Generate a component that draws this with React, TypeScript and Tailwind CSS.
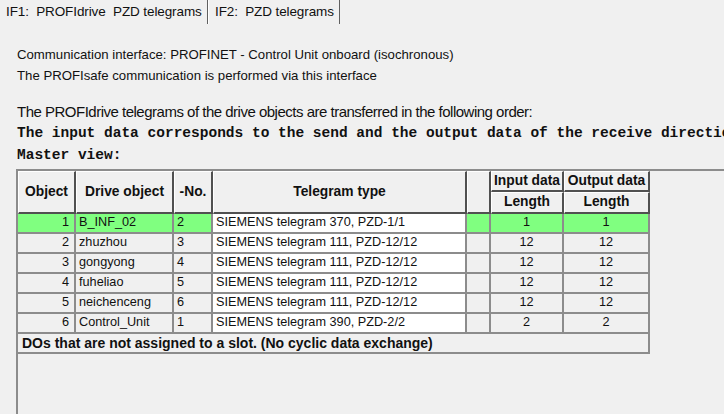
import React from "react";

const rows = [
  { n: "1", name: "B_INF_02", no: "2", tel: "SIEMENS telegram 370, PZD-1/1", i: "1", o: "1", green: true },
  { n: "2", name: "zhuzhou", no: "3", tel: "SIEMENS telegram 111, PZD-12/12", i: "12", o: "12" },
  { n: "3", name: "gongyong", no: "4", tel: "SIEMENS telegram 111, PZD-12/12", i: "12", o: "12" },
  { n: "4", name: "fuheliao", no: "5", tel: "SIEMENS telegram 111, PZD-12/12", i: "12", o: "12" },
  { n: "5", name: "neichenceng", no: "6", tel: "SIEMENS telegram 111, PZD-12/12", i: "12", o: "12" },
  { n: "6", name: "Control_Unit", no: "1", tel: "SIEMENS telegram 390, PZD-2/2", i: "2", o: "2" },
];

const hdr =
  "bg-[#f0f0f0] border-t border-l border-t-white border-l-white border-r-2 border-b-2 border-r-[#505050] border-b-[#505050] flex items-center justify-center font-bold text-[13.8px] text-[#111] whitespace-nowrap";

export default function App() {
  return (
    <div
      className="w-[724px] h-[414px] overflow-hidden bg-[#f0f0f0] text-[#111] flex flex-col"
      style={{ fontFamily: '"Liberation Sans", Arial, sans-serif' }}
    >
      {/* tabs */}
      <div className="h-[24px] flex items-stretch text-[13.5px] shrink-0">
        <div className="w-[208px] border-r border-r-[#606060] flex items-center pl-[6px] tracking-[-0.1px] whitespace-nowrap">
          IF1:&nbsp; PROFIdrive&nbsp; PZD telegrams
        </div>
        <div className="w-[132px] border-r border-r-[#606060] flex items-center pl-[6px] tracking-[-0.1px] border-l border-l-white whitespace-nowrap">
          IF2:&nbsp; PZD telegrams
        </div>
      </div>

      <div className="pl-[17px] pt-[20px] text-[13.2px]">
        <div className="h-[21px] leading-[21px] whitespace-nowrap">
          Communication interface: PROFINET - Control Unit onboard (isochronous)
        </div>
        <div className="h-[21px] leading-[21px] whitespace-nowrap">
          The PROFIsafe communication is performed via this interface
        </div>
      </div>

      <div className="pl-[17px] pt-[15px]">
        <div className="h-[21px] leading-[21px] text-[15px] tracking-[-0.5px] whitespace-nowrap">
          The PROFIdrive telegrams of the drive objects are transferred in the following order:
        </div>
        <div
          className="h-[22px] leading-[22px] text-[14.5px] font-bold whitespace-nowrap"
          style={{ fontFamily: '"Liberation Mono", "Courier New", monospace' }}
        >
          The input data corresponds to the send and the output data of the receive direction.
        </div>
        <div
          className="h-[22px] leading-[22px] text-[14.5px] font-bold whitespace-nowrap"
          style={{ fontFamily: '"Liberation Mono", "Courier New", monospace' }}
        >
          Master view:
        </div>
      </div>

      {/* frame */}
      <div className="ml-[16px] mt-[3px] flex-1 border-l-2 border-t-2 border-[#8c8c8c]">
        <div className="w-[632px] text-[12.7px]">
          {/* header */}
          <div className="grid grid-cols-[58px_98px_39px_254px_24px_73px_86px] grid-rows-[21px_22px]">
            <div className={hdr + " row-span-2"}>Object</div>
            <div className={hdr + " row-span-2"}>Drive object</div>
            <div className={hdr + " row-span-2"}>-No.</div>
            <div className={hdr + " row-span-2"}>Telegram type</div>
            <div className={hdr + " row-span-2"}></div>
            <div className={hdr}>Input data</div>
            <div className={hdr}>Output data</div>
            <div className={hdr}>Length</div>
            <div className={hdr}>Length</div>
          </div>
          {rows.map((r) => {
            const bg = r.green ? "bg-[#80ff80]" : "bg-[#f0f0f0]";
            const cell = "h-[20px] border-r-2 border-b-2 border-[#8c8c8c] flex items-center whitespace-nowrap";
            return (
              <div key={r.n} className="grid grid-cols-[58px_98px_39px_254px_24px_73px_86px]">
                <div className={`${cell} ${bg} justify-end pr-[5px]`}>{r.n}</div>
                <div className={`${cell} ${bg} pl-[3px]`}>{r.name}</div>
                <div className={`${cell} ${bg} pl-[3px]`}>{r.no}</div>
                <div className={`${cell} bg-white pl-[3px]`}>{r.tel}</div>
                <div className={`${cell} ${bg}`}></div>
                <div className={`${cell} ${bg} justify-center`}>{r.i}</div>
                <div className={`${cell} ${bg} justify-center`}>{r.o}</div>
              </div>
            );
          })}
          <div className="h-[20px] border-r-2 border-b-2 border-[#8c8c8c] flex items-center pl-[4px] font-bold text-[14px] bg-[#f0f0f0] whitespace-nowrap">
            DOs that are not assigned to a slot. (No cyclic data exchange)
          </div>
        </div>
      </div>
    </div>
  );
}
